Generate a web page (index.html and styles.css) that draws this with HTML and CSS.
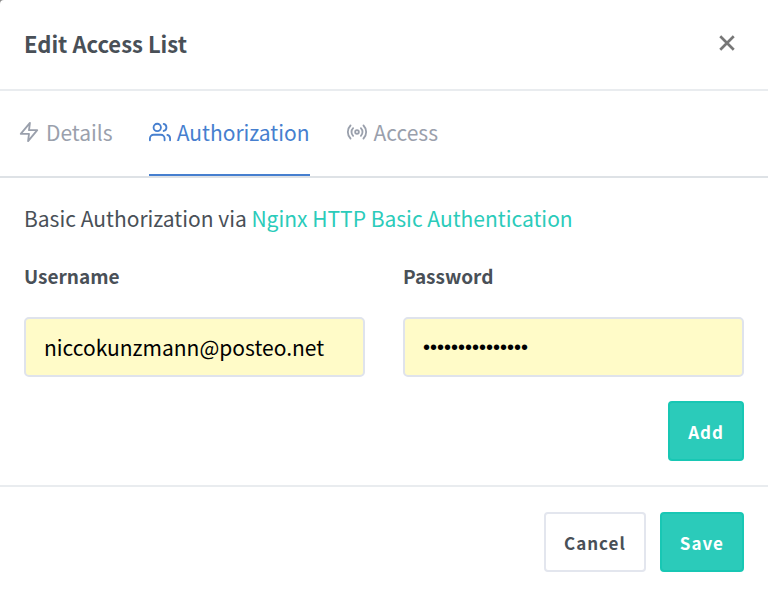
FILE: index.html
```html
<!DOCTYPE html>
<html lang="en">

<head>
  <meta charset="UTF-8">
  <meta name="viewport" content="width=device-width, initial-scale=1.0">
  <title>Edit Access List</title>
  <link rel="stylesheet" href="styles.css">
</head>

<body>

  <form class="modal">
    <header class="modal-header">
      <h1 class="modal-title">Edit Access List</h1>
      <button type="button" class="close" aria-label="Close">
        <svg viewBox="0 0 16 16"><path d="M2 2l12 12M14 2l-12 12"/></svg>
      </button>
    </header>

    <nav class="tabs">
      <a class="tab" href="#details">
        <svg class="icon" viewBox="0 0 24 24"><polygon points="13 2 3 14 12 14 11 22 21 10 12 10 13 2"/></svg>
        Details
      </a>
      <a class="tab active" href="#auth">
        <svg class="icon" viewBox="0 0 24 24"><path d="M17 21v-2a4 4 0 0 0-4-4H5a4 4 0 0 0-4 4v2"/><circle cx="9" cy="7" r="4"/><path d="M23 21v-2a4 4 0 0 0-3-3.87"/><path d="M16 3.13a4 4 0 0 1 0 7.75"/></svg>
        Authorization
      </a>
      <a class="tab" href="#access">
        <svg class="icon" viewBox="0 0 24 24"><circle cx="12" cy="12" r="2"/><path d="M16.24 7.76a6 6 0 0 1 0 8.49m-8.48-.01a6 6 0 0 1 0-8.49m11.31-2.82a10 10 0 0 1 0 14.14m-14.14 0a10 10 0 0 1 0-14.14"/></svg>
        Access
      </a>
    </nav>

    <section class="modal-body" id="auth">
      <p class="intro">Basic Authorization via <a href="#nginx">Nginx HTTP Basic Authentication</a></p>
      <div class="fields">
        <div class="field">
          <label for="username">Username</label>
          <input type="text" id="username" value="niccokunzmann@posteo.net">
        </div>
        <div class="field">
          <label for="password">Password</label>
          <input type="password" id="password" value="correcthorsebat">
        </div>
      </div>
      <div class="actions">
        <button type="button" class="btn btn-teal">Add</button>
      </div>
    </section>

    <footer class="modal-footer">
      <button type="button" class="btn btn-secondary">Cancel</button>
      <button type="submit" class="btn btn-teal">Save</button>
    </footer>
  </form>

</body>

</html>
```
FILE: styles.css
```css
* {
  box-sizing: border-box;
}

body {
  margin: 0;
  background-color: #8a8a8a;
  font-family: "Noto Sans CJK SC", "Open Sans", sans-serif;
  font-size: 21px;
  line-height: 32px;
  color: #495057;
}

.modal {
  min-height: 100vh;
  background-color: #fff;
  border-top-left-radius: 4px;
}

.modal-header {
  display: flex;
  justify-content: space-between;
  align-items: center;
  height: 91px;
  padding: 0 32px 4px 24px;
  border-bottom: 2px solid #e9ecef;
}

.modal-title {
  margin: 0;
  font-size: 22px;
  font-weight: bold;
}

.close {
  display: flex;
  padding: 0;
  border: 0;
  background: none;
  cursor: pointer;
}

.close svg {
  width: 18px;
  height: 18px;
  fill: none;
  stroke: #777;
  stroke-width: 2.4;
}

.tabs {
  display: flex;
  gap: 36px;
  height: 87px;
  padding-left: 18px;
  border-bottom: 2px solid #dee2e6;
}

.tab {
  display: flex;
  align-items: center;
  gap: 6px;
  padding-bottom: 2px;
  border-bottom: 2px solid transparent;
  color: #9aa0ac;
  text-decoration: none;
}

.tab.active {
  border-color: #467fcf;
  color: #467fcf;
}

.icon {
  width: 22px;
  height: 22px;
  fill: none;
  stroke: currentColor;
  stroke-width: 2;
  stroke-linecap: round;
  stroke-linejoin: round;
}

.modal-body {
  padding: 24px;
}

.intro {
  margin: 0 0 26px;
}

.intro a {
  color: #2bcbba;
  text-decoration: none;
}

.fields {
  display: grid;
  grid-template-columns: 1fr 1fr;
  gap: 38px;
}

.field label {
  display: block;
  margin-bottom: 25px;
  font-size: 19px;
  font-weight: bold;
}

.field input {
  display: block;
  width: 100%;
  height: 60px;
  padding: 0 18px;
  border: 2px solid #dfe3ec;
  border-radius: 5px;
  background-color: #fffbc8;
  font: inherit;
  color: #000;
}

.field input[type="password"] {
  font-family: "Liberation Sans", Arial, sans-serif;
  font-size: 20px;
}

.actions {
  display: flex;
  justify-content: flex-end;
  margin-top: 24px;
}

.btn {
  height: 60px;
  padding: 0 18px;
  border: 2px solid;
  border-radius: 4px;
  font-family: inherit;
  font-size: 17px;
  font-weight: bold;
  letter-spacing: 1px;
  cursor: pointer;
}

.btn-teal {
  border-color: #18c7b4;
  background-color: #2bcbba;
  color: #fff;
}

.btn-secondary {
  border-color: #e3e6ee;
  background-color: #fff;
  color: #495057;
}

.modal-footer {
  display: flex;
  justify-content: flex-end;
  gap: 14px;
  padding: 25px 24px;
  border-top: 2px solid #e9ecef;
}
```
